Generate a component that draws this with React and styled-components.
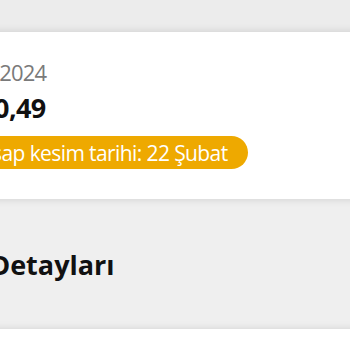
import React from 'react';
import styled, { createGlobalStyle } from 'styled-components';

const GlobalStyle = createGlobalStyle`
  html, body {
    margin: 0;
    padding: 0;
    background: #efefef;
    overflow: hidden;
  }
  body {
    font-family: "Open Sans", "Liberation Sans", sans-serif;
  }
`;

// sayfa solda kırpılmış gibi görünüyor
const Page = styled.div`
  width: 520px;
  margin-left: -100px;
  display: flex;
  flex-direction: column;
`;

const TopArea = styled.div`
  height: 32px;
  background: #ececec;
`;

const Card = styled.div`
  background: #fff;
  height: 167px;
  box-sizing: border-box;
  padding: 26px 16px 0 54px;
  box-shadow: 0 0 8px rgba(0, 0, 0, 0.14);
  position: relative;
  z-index: 1;
  display: flex;
  flex-direction: column;
  align-items: flex-start;
`;

const Period = styled.div`
  margin-left: -8px;
  font-size: 22px;
  line-height: 28px;
  letter-spacing: -0.8px;
  color: #7a7a7a;
`;

const Amount = styled.div`
  margin: 5px 0 0 -4px;
  font-size: 27px;
  line-height: 34px;
  font-weight: 700;
  letter-spacing: -0.6px;
  color: #111;
`;

const Badge = styled.div`
  margin-top: 11px;
  height: 33px;
  display: flex;
  align-items: center;
  padding: 0 20px 0 12px;
  border-radius: 17px;
  background: #eea900;
  color: #fff;
  font-size: 21px;
  letter-spacing: -0.6px;
`;

const Section = styled.div`
  height: 130px;
  box-sizing: border-box;
  padding: 49px 16px 0 0;
  background: #efefef;
`;

const Heading = styled.h2`
  margin: 0 0 0 -6px;
  font-size: 27px;
  line-height: 34px;
  font-weight: 700;
  color: #111;
`;

const BottomCard = styled.div`
  background: #fff;
  height: 60px;
  box-shadow: 0 0 8px rgba(0, 0, 0, 0.12);
`;

export default function App() {
  return (
    <>
      <GlobalStyle />
      <Page>
        <TopArea />
        <Card>
          <Period>Ocak 2024</Period>
          <Amount>₺150,49</Amount>
          <Badge>Hesap kesim tarihi: 22 Şubat</Badge>
        </Card>
        <Section>
          <Heading>Fatura Detayları</Heading>
        </Section>
        <BottomCard />
      </Page>
    </>
  );
}
